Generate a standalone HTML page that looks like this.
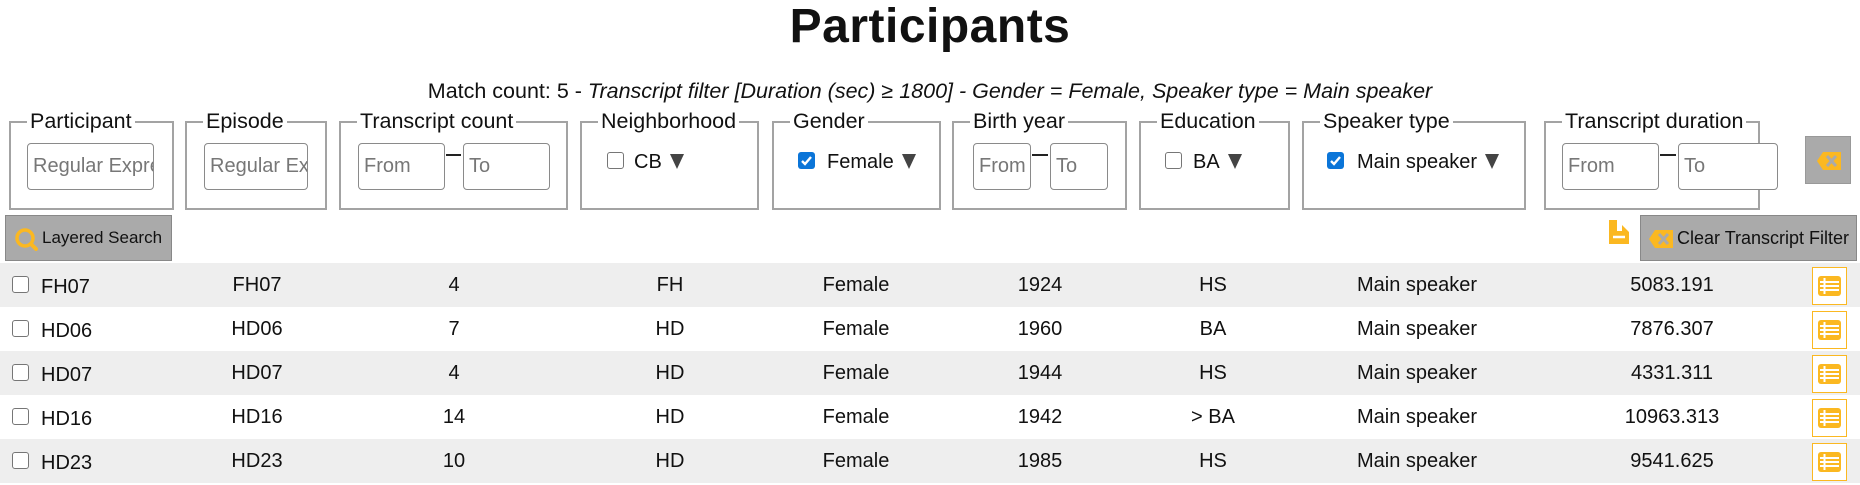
<!DOCTYPE html>
<html><head><meta charset="utf-8"><style>
*{box-sizing:border-box;margin:0;padding:0}
body{width:1860px;height:485px;background:#fff;font-family:"Liberation Sans",sans-serif;color:#111;position:relative;overflow:hidden}
.a{position:absolute}
.fs{position:absolute;top:121px;height:89px;border:2px solid #a3a3a3}
.lg{position:absolute;top:-15px;left:16px;background:#fff;padding:0 3px;font-size:21.5px;line-height:26px;color:#111;white-space:nowrap}
.in{position:absolute;top:143px;height:47px;border:1px solid #8a8a8a;border-radius:4px;font-size:20px;color:#777;line-height:45px;padding-left:5px;overflow:hidden;white-space:nowrap;background:#fff}
.dash{position:absolute;top:154px;height:2px;background:#222}
.cb{position:absolute;width:17px;height:17px;border:1.5px solid #767676;border-radius:3px;background:#fff}
.cbc{position:absolute;width:17px;height:17px;border-radius:3px;background:#0b75d8}
.t{position:absolute;font-size:20px;line-height:24px;white-space:nowrap}
.tri{display:inline-block;width:0;height:0;border-left:7px solid transparent;border-right:7px solid transparent;border-top:15px solid #444;margin-left:8px;vertical-align:-1px}
.row{position:absolute;left:0;width:1860px;height:44px}
.c{position:absolute;top:10px;font-size:20px;line-height:24px;white-space:nowrap;transform:translateX(-50%)}
.ib{position:absolute;left:1812px;width:35px;height:38px;border:1.5px solid #fbb821;background:#fff}
</style></head><body>
<div class="a" style="left:0;width:1860px;top:2px;text-align:center;font-size:48px;font-weight:bold;line-height:50px;letter-spacing:0.5px">Participants</div>
<div class="a" style="left:0;width:1860px;top:79px;text-align:center;font-size:21.5px;line-height:24px">Match count: 5 - <i>Transcript filter [Duration (sec) ≥ 1800] - Gender = Female, Speaker type = Main speaker</i></div>

<div class="fs" style="left:9px;width:165px"><div class="lg">Participant</div></div>
<div class="in" style="left:27px;width:127px">Regular Expression</div>
<div class="fs" style="left:185px;width:142px"><div class="lg">Episode</div></div>
<div class="in" style="left:204px;width:104px">Regular Expression</div>
<div class="fs" style="left:339px;width:229px"><div class="lg">Transcript count</div></div>
<div class="in" style="left:358px;width:87px">From</div><div class="dash" style="left:446px;width:15px"></div><div class="in" style="left:463px;width:87px">To</div>
<div class="fs" style="left:580px;width:179px"><div class="lg">Neighborhood</div></div>
<div class="cb" style="left:607px;top:152px"></div><div class="t" style="left:634px;top:150px">CB<span class="tri"></span></div>
<div class="fs" style="left:772px;width:169px"><div class="lg">Gender</div></div>
<div class="cbc" style="left:798px;top:152px"><svg width="17" height="17"><path d="M4 9l3 3 6-7" stroke="#fff" stroke-width="2.4" fill="none"/></svg></div><div class="t" style="left:827px;top:150px">Female<span class="tri"></span></div>
<div class="fs" style="left:952px;width:175px"><div class="lg">Birth year</div></div>
<div class="in" style="left:973px;width:58px">From</div><div class="dash" style="left:1032px;width:16px"></div><div class="in" style="left:1050px;width:58px">To</div>
<div class="fs" style="left:1139px;width:151px"><div class="lg">Education</div></div>
<div class="cb" style="left:1165px;top:152px"></div><div class="t" style="left:1193px;top:150px">BA<span class="tri"></span></div>
<div class="fs" style="left:1302px;width:224px"><div class="lg">Speaker type</div></div>
<div class="cbc" style="left:1327px;top:152px"><svg width="17" height="17"><path d="M4 9l3 3 6-7" stroke="#fff" stroke-width="2.4" fill="none"/></svg></div><div class="t" style="left:1357px;top:150px">Main speaker<span class="tri"></span></div>
<div class="fs" style="left:1544px;width:216px"><div class="lg">Transcript duration</div></div>
<div class="in" style="left:1562px;width:97px">From</div><div class="dash" style="left:1660px;width:16px"></div><div class="in" style="left:1678px;width:100px">To</div>
<div class="a" style="left:1805px;top:136px;width:46px;height:48px;background:#aaa;border:1px solid #999"><svg class="a" style="left:11px;top:15px" width="24" height="18"><path d="M6 0H24V18H6L0 9Z" fill="#fbb821"/><path d="M10 4l9 10M19 4l-9 10" stroke="#aaa" stroke-width="3"/></svg></div>

<div class="a" style="left:5px;top:215px;width:167px;height:46px;background:#aaa;border:1px solid #888"><svg class="a" style="left:8px;top:11px" width="26" height="26"><circle cx="11" cy="11" r="8" stroke="#fbb821" stroke-width="3.5" fill="none"/><path d="M17 17l5 5" stroke="#fbb821" stroke-width="4" stroke-linecap="round"/></svg><div class="a" style="left:36px;top:12px;font-size:17px;line-height:20px">Layered Search</div></div>
<svg class="a" style="left:1609px;top:220px" width="22" height="25"><path d="M0 0H8V11H13L13 5 20 12V24H0Z" fill="#fbb821"/><path d="M4 17H16" stroke="#fff" stroke-width="2.5"/></svg>
<div class="a" style="left:1640px;top:215px;width:217px;height:46px;background:#aaa;border:1px solid #888"><svg class="a" style="left:8px;top:14px" width="24" height="18"><path d="M6 0H24V18H6L0 9Z" fill="#fbb821"/><path d="M10 4l9 10M19 4l-9 10" stroke="#aaa" stroke-width="3"/></svg><div class="a" style="left:36px;top:12px;font-size:18px;line-height:21px;white-space:nowrap">Clear Transcript Filter</div></div>

<div class="row" style="top:263px;background:#eee"></div>
<div class="row" style="top:351px;background:#eee"></div>
<div class="row" style="top:439px;background:#eee"></div>

<div id="rows"></div>
<script>
var d=[["FH07","4","FH","Female","1924","HS","5083.191"],["HD06","7","HD","Female","1960","BA","7876.307"],["HD07","4","HD","Female","1944","HS","4331.311"],["HD16","14","HD","Female","1942","> BA","10963.313"],["HD23","10","HD","Female","1985","HS","9541.625"]];
var h="";
d.forEach(function(r,i){var y=263+i*44;
h+='<div class="cb" style="left:12px;top:'+(y+13)+'px"></div>';
h+='<div class="t" style="left:41px;top:'+(y+12)+'px">'+r[0]+'</div>';
var v=[r[0],r[1],r[2],r[3],r[4],r[5],"Main speaker",r[6]];
var cx=[257,454,670,856,1040,1213,1417,1672];
for(var k=0;k<8;k++)h+='<div class="c" style="left:'+cx[k]+'px;top:'+(y+10)+'px">'+v[k].replace(">","&gt;")+'</div>';
h+='<div class="ib" style="top:'+(y+4)+'px"><svg style="position:absolute;left:5px;top:8px" width="23" height="20"><rect width="23" height="20" rx="3" fill="#fbb821"/><path d="M2 6H21M2 10H21M2 14H21M6.5 2V18" stroke="#fff" stroke-width="2"/></svg></div>';
});
document.getElementById("rows").innerHTML=h;
</script>
</body></html>
